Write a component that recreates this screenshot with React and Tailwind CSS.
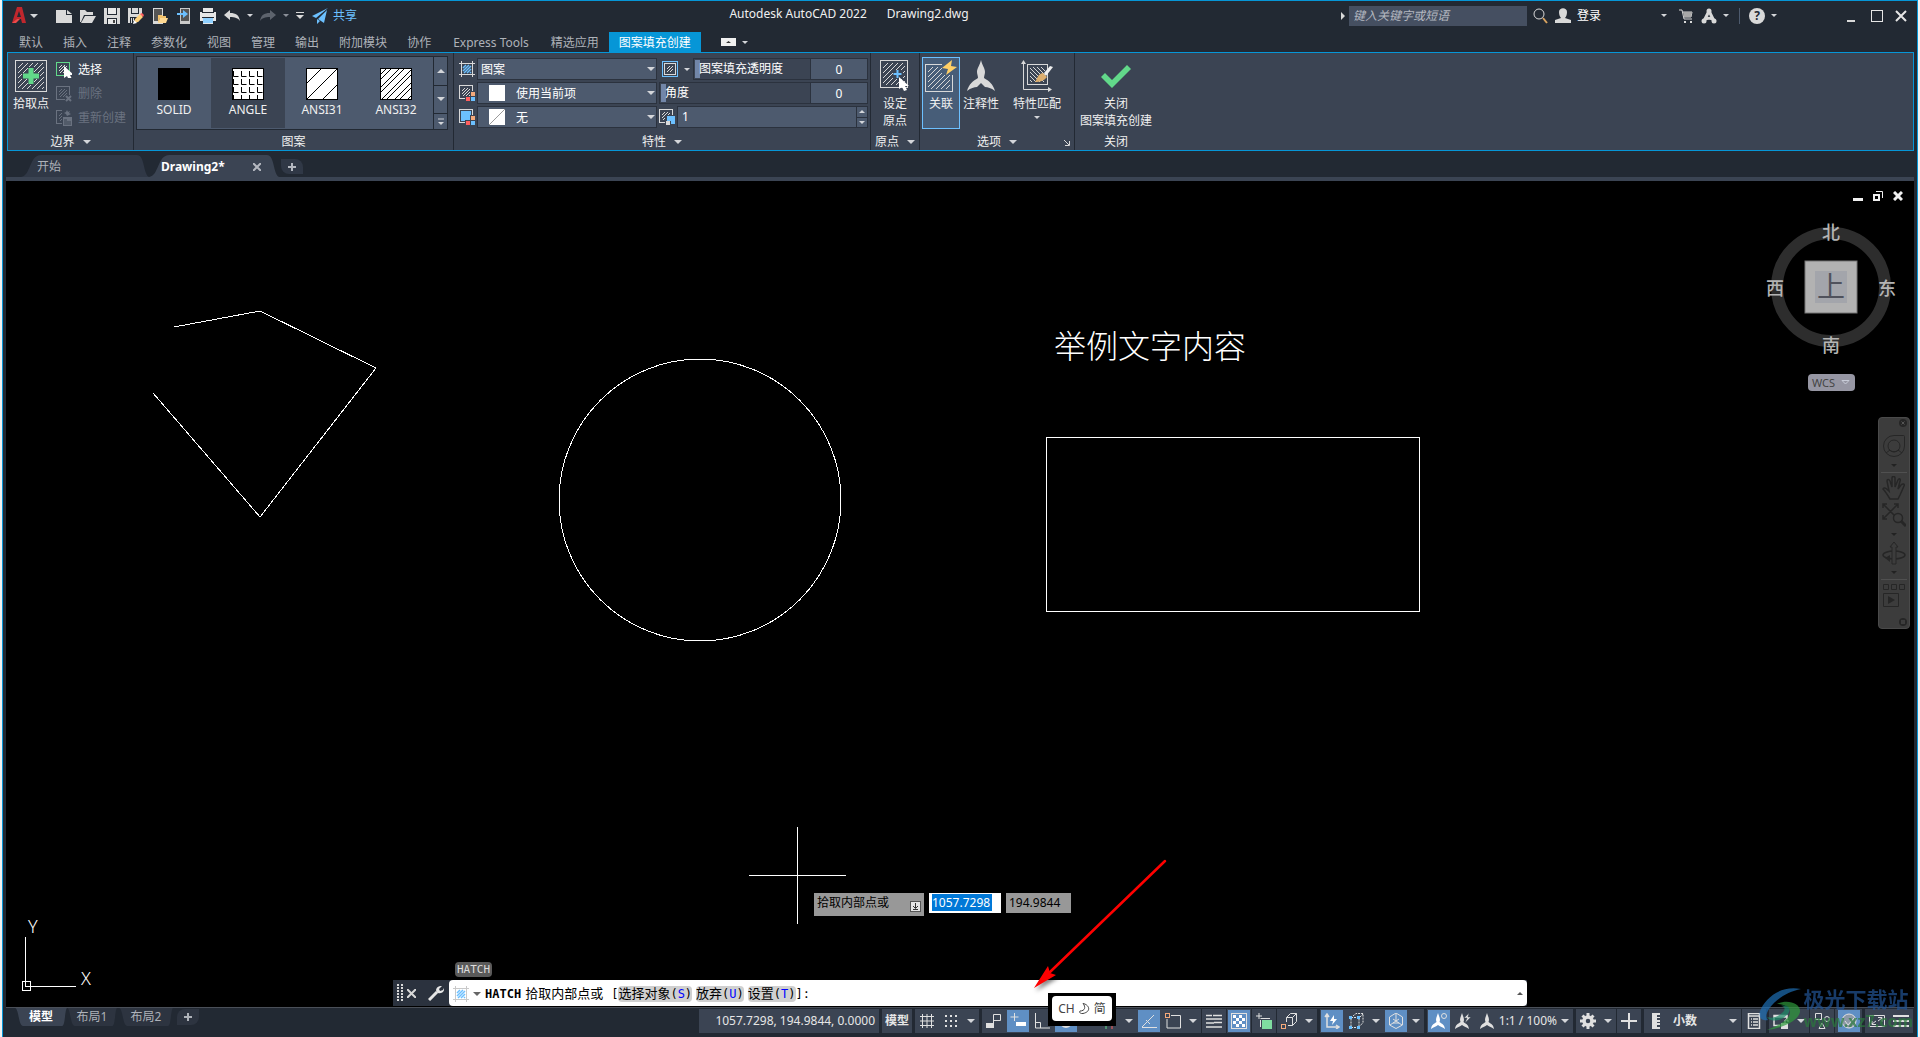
import React, { useState } from "react";

const menuTabs = ["默认", "插入", "注释", "参数化", "视图", "管理", "输出", "附加模块", "协作", "Express Tools", "精选应用", "图案填充创建"];

// diagonal hatch lines inside a square
const hatch = (x, y, w, step, flip) => {
  let d = "";
  for (let c = step; c < 2 * w; c += step) {
    const a = Math.max(0, c - w);
    const b = Math.min(c, w);
    d += flip ? `M${x + w - a} ${y + b}L${x + w - b} ${y + a}` : `M${x + a} ${y + b}L${x + b} ${y + a}`;
  }
  return d;
};

const Drop = ({ className = "text-[#d4d6da]", small }) => (
  <svg width={small ? 6 : 8} height={small ? 3 : 4} viewBox="0 0 8 4" className={`shrink-0 ${className}`}>
    <path d="M0 0h8L4 4z" fill="currentColor" />
  </svg>
);

const Svg = ({ s = 16, h, vb, children, ...rest }) => (
  <svg width={s} height={h || s} viewBox={vb || `0 0 ${s} ${h || s}`} fill="none" className="shrink-0" {...rest}>
    {children}
  </svg>
);

const HatchBox = ({ x = 1, y = 1, w = 12, step = 3, color = "#d9d9d9", line = "#d9d9d9", flip }) => (
  <>
    <path d={hatch(x + 2, y + 2, w - 4, step, flip)} stroke={line} />
    <rect x={x - 0.5} y={y - 0.5} width={w + 1} height={w + 1} stroke={color} />
  </>
);

const Swatches = () => (
  <>
    <path d="M6 11h10v5H6zM11 6h5v10h-5z" fill="#3b4453" />
    <path d="M7 12h4v4H7z" fill="#ff5f5f" />
    <path d="M12 12h4v4h-4z" fill="#6cc0ff" />
    <path d="M12 7h4v4h-4z" fill="#f5a97a" />
  </>
);

/* ---------- title bar ---------- */

const quickIcons = [
  { label: "新建", icon: <path d="M0 2h10v5h6v8H0zM11 2l5 4h-5z" fill="#d9d9d9" /> },
  { label: "打开", icon: <path d="M0 14V2h5l2 2h6v3H4L1 14zM5 8h11l-4 7H1z" fill="#d9d9d9" /> },
  {
    label: "保存",
    icon: (
      <>
        <path d="M0 0h16v16H0z" fill="#d9d9d9" />
        <path d="M3 0h10v7H3zM3 10h10v6H3z" fill="#222933" />
        <path d="M4 0h8v6H4zM4 11h8v5H4z" fill="#e8e8e8" />
        <path d="M9 12h2v3H9z" fill="#444" />
      </>
    ),
  },
  {
    label: "另存为",
    icon: (
      <>
        <path d="M0 0h14v9l-5 6H0z" fill="#d9d9d9" />
        <path d="M3 0h8v6H3zM2 9h8v6H2z" fill="#222933" />
        <path d="M4 0h6v5H4zM3 10h1v5H3zM5 10h1v3H5z" fill="#d9d9d9" />
        <path d="M6 15l1-4 5-5 3 3-5 5z" fill="#ffd27d" />
        <path d="M12 6l2-1 2 2-1 2z" fill="#ff5f5f" />
        <path d="M5 16l1-4 3 3z" fill="#fff" />
      </>
    ),
  },
  {
    label: "从移动设备打开",
    icon: (
      <>
        <path d="M1 0h10v16H1z" fill="#d9d9d9" />
        <path d="M2 1h8v12H2z" fill="#555" />
        <path d="M6 15V7h4l1 1h3v2H8z" fill="#f4c26b" />
        <path d="M8 10h8l-2 5H6z" fill="#ffd891" />
      </>
    ),
  },
  {
    label: "保存到移动设备",
    icon: (
      <>
        <path d="M4 0h10v16H4z" fill="#c9c9c9" />
        <path d="M5 1h8v12H5z" fill="#555" />
        <path d="M1 5h6V2l5 4-5 4V7H1z" fill="#6cc0ff" />
      </>
    ),
  },
  {
    label: "打印",
    icon: (
      <>
        <path d="M3 0h10v4h3v9h-3v3H3v-3H0V4h3z" fill="#e6e6e6" />
        <path d="M2 4h12v1H2zM2 9h12v1H2z" fill="#222933" />
        <path d="M3 10h10v5H3z" fill="#8fd0ff" />
      </>
    ),
  },
  { label: "放弃", icon: <path d="M0 7l6-5v3c6 0 9 2 10 8-2-3-5-4-10-4v3z" fill="#d9d9d9" /> },
];

function TitleBar() {
  return (
    <header className="flex h-[31px] items-center justify-between pb-1 pl-[9px] pr-[10px] pt-0.5">
      <div className="flex items-center">
        <button aria-label="应用程序菜单" className="flex w-10 items-center gap-1">
          <Svg s={14} h={17} vb="0 0 14 17">
            <path d="M5 0h5l4 16h-4l-1-4H5l-2 4H0z" fill="#c0272d" />
            <path d="M7 4l2 6H5z" fill="#222933" />
            <path d="M0 16l5-4h3l-4 4z" fill="#ee4a4a" />
          </Svg>
          <Drop />
        </button>
        {quickIcons.map((q) => (
          <button key={q.label} aria-label={q.label} className="flex w-6 justify-center">
            <Svg>{q.icon}</Svg>
          </button>
        ))}
        <button aria-label="放弃列表" className="flex w-3 justify-center"><Drop small /></button>
        <button aria-label="重做" className="flex w-6 justify-center">
          <Svg><path d="M16 7l-6-5v3C4 5 1 7 0 13c2-3 5-4 10-4v3z" fill="#5d636d" /></Svg>
        </button>
        <button aria-label="重做列表" className="flex w-3 justify-center"><Drop small className="text-[#8b9099]" /></button>
        <button aria-label="自定义快速访问工具栏" className="flex w-4 justify-center">
          <Svg s={8} h={8}><path d="M0 0h8v1H0zM0 3h8L4 7z" fill="#d9d9d9" /></Svg>
        </button>
        <button className="flex items-center gap-[5px] pl-1 text-[#6cc0ff]">
          <Svg>
            <path d="M16 0L0 8l4 2zM15 2l-9 9 6 4zM5 11v5l3-3z" fill="#6cc0ff" />
          </Svg>
          共享
        </button>
      </div>
      <h1 className="flex gap-5 pb-1 text-[#f0f0f0]">
        <span>Autodesk AutoCAD 2022</span>
        <span>Drawing2.dwg</span>
      </h1>
      <div className="flex items-center">
        <Svg s={4} h={8} vb="0 0 4 8"><path d="M0 0l4 4-4 4z" fill="#d9d9d9" /></Svg>
        <input
          aria-label="搜索"
          placeholder="键入关键字或短语"
          className="ml-1 h-5 w-[178px] bg-[#454f61] px-1 italic text-white outline-none placeholder:text-[#b4b8c0]"
        />
        <button aria-label="查找" className="ml-1.5">
          <Svg>
            <circle cx="6" cy="6" r="5" stroke="#d9d9d9" />
            <path d="M10 10l4 5" stroke="#d8a35f" strokeWidth="2" />
          </Svg>
        </button>
        <button className="ml-1.5 flex items-center gap-1.5 text-white">
          <Svg>
            <path d="M4 4c0-5 8-5 8 0 0 3-1 5-2 6l6 2v3H0v-3l6-2C5 9 4 7 4 4z" fill="#d9d9d9" />
          </Svg>
          登录
        </button>
        <button aria-label="登录选项" className="ml-[60px]"><Drop small /></button>
        <button aria-label="应用商店" className="ml-3">
          <Svg s={14}>
            <path d="M0 1h3l2 9h8M4 3h9l-1 5H5" stroke="#d9d9d9" />
            <path d="M4 3h9l-1 5H5z" fill="#a8a8a8" />
            <path d="M5 12h2v2H5zM11 12h2v2h-2z" fill="#d9d9d9" />
          </Svg>
        </button>
        <button aria-label="Autodesk App" className="ml-2 flex items-center gap-1.5">
          <Svg>
            <path d="M8 3L3 13M8 3l5 10M3 12c3-2 7-2 10 0" stroke="#d9d9d9" strokeWidth="3" />
            <circle cx="8" cy="3" r="2.500" fill="#d9d9d9" /><circle cx="3" cy="13" r="2.500" fill="#d9d9d9" /><circle cx="13" cy="13" r="2.500" fill="#d9d9d9" />
          </Svg>
          <Drop small />
        </button>
        <span className="ml-2.5 h-4 w-px bg-[#4d5a6e]" />
        <button className="ml-[9px] flex items-center gap-1.5" aria-label="帮助">
          <span className="flex size-4 items-center justify-center rounded-full bg-[#d9d9d9] font-bold text-[#222933]">?</span>
          <Drop small />
        </button>
        <button aria-label="最小化" className="ml-[70px] flex h-3 w-[10px] items-end"><span className="h-0.5 w-2 bg-[#d9d9d9]" /></button>
        <button aria-label="最大化" className="ml-3.5 h-3 w-3 border border-[#e6e6e6]" />
        <button aria-label="关闭" className="ml-3">
          <Svg s={12}><path d="M1 1l10 10M11 1L1 11" stroke="#e6e6e6" strokeWidth="2" /></Svg>
        </button>
      </div>
    </header>
  );
}

function MenuTabs() {
  const [active, setActive] = useState("图案填充创建");
  return (
    <nav className="flex h-5 items-center pl-1.5">
      {menuTabs.map((t) => (
        <button
          key={t}
          onClick={() => setActive(t)}
          className={`h-5 pt-0.5 ${t === "Express Tools" ? "px-3" : "px-2.5"} ${active === t ? "bg-[#0696d7] text-white" : "text-[#aeb2b9]"}`}
        >
          {t}
        </button>
      ))}
      <button aria-label="最小化功能区" className="ml-5 flex items-center gap-1.5">
        <Svg s={15} h={8}><path d="M0 0h15v8H0z" fill="#f0f0f0" /><path d="M5 5h5L7.500 3z" fill="#333" /></Svg>
        <Drop small />
      </button>
    </nav>
  );
}

/* ---------- ribbon ---------- */

const Panel = ({ title, drop, corner, className = "", children }) => (
  <section className={`flex flex-col border-r border-[#222933] ${className}`}>
    <div className="flex flex-1">{children}</div>
    <div className="relative flex h-[18px] items-center justify-center gap-2 pt-0.5 text-[#f0f0f0]">
      {title}
      {drop && <Drop />}
      {corner && (
        <button aria-label="图案填充设置" className="absolute bottom-1 right-1">
          <Svg s={6}><path d="M0 0l5 5M5.500 1v4.500H1" stroke="#d9d9d9" /></Svg>
        </button>
      )}
    </div>
  </section>
);

const BigButton = ({ icon, lines, drop, active, className = "" }) => (
  <button
    className={`mt-1 flex h-[72px] flex-col items-center border pt-0.5 leading-[17px] text-[#f0f0f0] ${
      active ? "border-[#6cc0ff] bg-[#475d78]" : "border-transparent"
    } ${className}`}
  >
    <span className="mb-[3px] flex h-8 items-center justify-center">{icon}</span>
    {lines.map((l) => (
      <span key={l} className="whitespace-nowrap">{l}</span>
    ))}
    {drop && <span className="mt-1"><Drop small /></span>}
  </button>
);

const Cursor = ({ x, y }) => (
  <path transform={`translate(${x} ${y})`} d="M0 0v12l3-2 2 4 3-1-2-4h4z" fill="#fff" />
);

const patterns = [
  { name: "SOLID", art: <path d="M0 0h32v32H0z" fill="#000" /> },
  {
    name: "ANGLE",
    art: [0, 1, 2, 3, 4].map((r) => [0, 1, 2, 3].map((c) => (
      <path key={`${r}${c}`} d={`M${c * 8 + 1.5} ${r * 8 - 5}v5.500h5`} stroke="#000" />
    ))),
  },
  { name: "ANSI31", art: <path d={hatch(0, 0, 32, 16)} stroke="#000" /> },
  { name: "ANSI32", art: <path d="M0 7L7 0M0 12L12 0M0 20L20 0M0 25L25 0M1 32L32 1M6 32L32 6M14 32l18-18M19 32l13-13M27 32l5-5" stroke="#000" /> },
];

function Gallery() {
  const [picked, setPicked] = useState("ANGLE");
  return (
    <div className="ml-[2px] mr-[2px] mt-[3px] flex h-[74px] border border-[#222933] bg-[#4d5a6e]">
      <div className="flex flex-1 py-px">
        {patterns.map((p) => (
          <button
            key={p.name}
            onClick={() => setPicked(p.name)}
            className={`flex w-[74px] flex-col items-center pt-2.5 text-[#f0f0f0] ${picked === p.name ? "bg-[#3b4453]" : ""}`}
          >
            <svg width="32" height="32" className="mb-px bg-white" fill="none">
              {p.art}
              <rect x="0.5" y="0.5" width="31" height="31" stroke="#000" />
            </svg>
            {p.name}
          </button>
        ))}
      </div>
      <div className="flex w-[14px] flex-col gap-px border-l border-[#222933] bg-[#222933]">
        <button aria-label="上一行" className="flex flex-1 items-center justify-center bg-[#4d5a6e]"><Drop className="rotate-180 text-[#d4d6da]" /></button>
        <button aria-label="下一行" className="flex flex-1 items-center justify-center bg-[#4d5a6e]"><Drop /></button>
        <button aria-label="展开" className="flex h-[15px] flex-col items-center justify-center gap-0.5 bg-[#4d5a6e]">
          <span className="h-0.5 w-1.5 bg-[#8b93a1]" /><Drop small />
        </button>
      </div>
    </div>
  );
}

const Select = ({ id, label, value, swatch }) => (
  <span className="relative flex h-[22px] w-[180px]">
    <select
      id={id}
      aria-label={label}
      defaultValue={value}
      className={`w-full appearance-none border border-[#2b323e] bg-[#4d5a6e] pt-px text-white outline-none ${swatch ? "pl-[38px]" : "pl-[3px]"}`}
    >
      <option>{value}</option>
    </select>
    {swatch && <span className="pointer-events-none absolute left-3 top-[3px]">{swatch}</span>}
    <span className="pointer-events-none absolute right-0.5 top-[9px]"><Drop /></span>
  </span>
);

const Slider = ({ id, label }) => (
  <div className="flex h-[22px] flex-1 border border-[#2b323e]">
    <div className="relative flex-1">
      <input
        id={id}
        type="range"
        defaultValue="0"
        className="block h-full w-full appearance-none bg-transparent pl-px [&::-webkit-slider-thumb]:h-[18px] [&::-webkit-slider-thumb]:w-[5px] [&::-webkit-slider-thumb]:appearance-none [&::-webkit-slider-thumb]:bg-[#7286a8]"
      />
      <label htmlFor={id} className="pointer-events-none absolute left-[5px] top-0 leading-5 text-white">{label}</label>
    </div>
    <input
      aria-label={`${label}值`}
      defaultValue="0"
      className="w-[57px] border-l border-[#2b323e] bg-[#4d5a6e] pt-px text-center text-white outline-none"
    />
  </div>
);

const SmallRow = ({ icon, text, disabled }) => (
  <button disabled={disabled} className={`flex h-6 items-center gap-1.5 whitespace-nowrap ${disabled ? "text-[#6a7280]" : "text-white"}`}>
    <Svg>{icon}</Svg>
    {text}
  </button>
);

function Ribbon() {
  return (
    <div className="ml-1 mr-[3px] flex h-[99px] border border-[#0696d7] bg-[#3b4453]">
      <Panel title="边界" drop className="w-[126px]">
        <BigButton
          className="ml-[5px] w-9"
          lines={["拾取点"]}
          icon={
            <Svg s={32}>
              <HatchBox x={1} y={1} w={30} step={5} />
              <path d="M13 7h6v6h6v6h-6v6h-6v-6H7v-6h6z" fill="#3b4453" />
              <path d="M13.500 8h5v5.500H24v5h-5.500V24h-5v-5.500H8v-5h5.500z" fill="#62d98a" />
            </Svg>
          }
        />
        <div className="ml-[7px] mt-[5px] flex flex-col">
          <SmallRow text="选择" icon={<><HatchBox color="#62d98a" /><Cursor x={8} y={4} /></>} />
          <SmallRow
            disabled
            text="删除"
            icon={<><HatchBox color="#6a7280" line="#6a7280" /><path d="M9 9h7v7H9z" fill="#3b4453" /><path d="M10 10l5 5M15 10l-5 5" stroke="#6a7280" strokeWidth="2" /></>}
          />
          <SmallRow
            disabled
            text="重新创建"
            icon={<><HatchBox color="#6a7280" line="#6a7280" /><path d="M6 0h10v16H6z" fill="#3b4453" /><path d="M7 7h9v9H7zM11 0l1 2 2-1-1 2 2 1-2 1-2 1-1-2-2-1 2-1z" fill="#6a7280" /><path d="M8 10h3M8 12h7M8 14h7" stroke="#3b4453" /></>}
          />
        </div>
      </Panel>

      <Panel title="图案" className="w-[320px]">
        <Gallery />
      </Panel>

      <Panel title="特性" drop className="w-[417px]">
        <div className="flex flex-1 flex-col gap-0.5 pl-[5px] pr-0.5 pt-[5px]">
          <div className="flex items-center gap-0.5">
            <label htmlFor="type">
              <Svg><path d="M0 2.500h16M0 13.500h16M2.500 0v16M13.500 0v16" stroke="#d9d9d9" /><path d={hatch(4, 4, 8, 3)} stroke="#6cc0ff" strokeWidth="1.500" /></Svg>
            </label>
            <Select id="type" label="图案填充类型" value="图案" />
            <button aria-label="图案填充透明度选项" className="ml-[3px] mr-px flex items-center gap-1.5">
              <Svg><rect x="0.500" y="0.500" width="15" height="15" stroke="#6cc0ff" /><HatchBox x={3} y={3} w={10} /></Svg>
              <Drop small />
            </button>
            <Slider id="opacity" label="图案填充透明度" />
          </div>
          <div className="flex items-center gap-0.5">
            <label htmlFor="color"><Svg><HatchBox /><Swatches /></Svg></label>
            <Select id="color" label="图案填充颜色" value="使用当前项" swatch={<Svg><path d="M0 0h16v16H0z" fill="#fff" /></Svg>} />
            <Slider id="angle" label="角度" />
          </div>
          <div className="flex items-center gap-0.5">
            <label htmlFor="bg">
              <Svg><rect x="0.500" y="0.500" width="13" height="13" stroke="#d9d9d9" /><path d="M2 2h10v10H2z" fill="#6cc0ff" /><Swatches /></Svg>
            </label>
            <Select
              id="bg"
              label="背景色"
              value="无"
              swatch={<Svg><path d="M0 0h16v16H0z" fill="#fff" /><path d="M0 16L16 0" stroke="#999" /></Svg>}
            />
            <label htmlFor="scale">
              <Svg><HatchBox /><path d="M6 6h10v10H6z" fill="#3b4453" /><path d="M8 7h8v8h-4v-3H8z" fill="#6cc0ff" /><path d="M7 12h4v4H7z" fill="#d9d9d9" /></Svg>
            </label>
            <div className="flex h-[22px] flex-1 border border-[#2b323e] bg-[#4d5a6e]">
              <input id="scale" defaultValue="1" className="w-0 flex-1 bg-transparent pl-1 text-white outline-none" />
              <div className="flex w-[11px] flex-col gap-px bg-[#2b323e] pl-px">
                <button aria-label="增大" className="flex flex-1 items-center justify-center bg-[#4d5a6e]"><Drop small className="rotate-180 text-[#d4d6da]" /></button>
                <button aria-label="减小" className="flex flex-1 items-center justify-center bg-[#4d5a6e]"><Drop small /></button>
              </div>
            </div>
          </div>
        </div>
      </Panel>

      <Panel title="原点" drop className="w-[49px]">
        <BigButton
          className="w-12"
          lines={["设定", "原点"]}
          icon={
            <Svg s={32}>
              <HatchBox x={2} y={1} w={26} step={5} />
              <path d="M14 10h10v9H14z" fill="#3b4453" />
              <path d="M18.500 10v8M14.500 14h8" stroke="#6cc0ff" strokeWidth="2" />
              <Cursor x={20} y={17} />
            </Svg>
          }
        />
      </Panel>

      <Panel title="选项" drop corner className="w-[155px]">
        <BigButton
          active
          className="ml-0.5 w-[38px]"
          lines={["关联"]}
          icon={
            <Svg s={32}>
              <HatchBox x={1} y={5} w={26} step={5} />
              <path d="M17 4h14v11H17z" fill="#475d78" />
              <path d="M27 0L17 8l6 1-2 6 11-8-6-1z" fill="#ffcf66" />
            </Svg>
          }
        />
        <BigButton
          className="w-[42px]"
          lines={["注释性"]}
          icon={<Svg s={32}><path d="M16 0c1 5 4 8 4 12 0 2-1 4-1 6 5 3 9 6 11 13-4-3-7-4-10-4l-4-4-4 4c-3 0-6 1-10 4 2-7 6-10 11-13 0-2-1-4-1-6 0-4 3-7 4-12z" fill="#d9d9d9" /></Svg>}
        />
        <BigButton
          drop
          className="ml-2 w-[54px]"
          lines={["特性匹配"]}
          icon={
            <Svg s={32}>
              <path d="M2.500 2v27.500H30" stroke="#d9d9d9" />
              <path d="M0 4l2.500-4L5 4zM27 27l4 2.500-4 2.500z" fill="#d9d9d9" />
              <HatchBox x={7} y={5} w={19} step={4} flip />
              <path d="M14 22c2-2 2-8 8-9l4 4c-3 4-7 5-12 5z" fill="#dcae6e" />
              <path d="M23 13l6-7 3 1-7 9z" fill="#f0f0f0" />
            </Svg>
          }
        />
      </Panel>

      <section className="w-[82px]">
        <BigButton
          className="w-[82px]"
          lines={["关闭", "图案填充创建"]}
          icon={<Svg s={32}><path d="M1 17l4-4 7 7L27 5l4 4-19 19z" fill="#62d98a" /></Svg>}
        />
        <div className="mt-[3px] flex h-[18px] items-center justify-center pt-0.5 text-[#f0f0f0]">关闭</div>
      </section>
    </div>
  );
}

/* ---------- document tabs ---------- */

const TabShape = ({ fill, flip }) => (
  <svg viewBox="0 0 128 22" preserveAspectRatio="none" className={`absolute inset-0 h-full w-full ${flip ? "-scale-y-100" : ""}`}>
    <path d="M0 22C10 21 8 0 20 0h96c8 0 6 19 12 22z" fill={fill} />
  </svg>
);

function DocTabs() {
  return (
    <div className="flex h-[26px] items-end pl-[18px]">
      <button className="relative h-[22px] w-[128px] pl-4 pt-px text-left text-[#aeb2b9]">
        <TabShape fill="#303846" />
        <span className="relative">开始</span>
      </button>
      <div className="relative flex h-[22px] w-[130px] items-center justify-between pl-3 pr-[18px] pt-px text-white">
        <TabShape fill="#3b4453" />
        <button className="relative font-bold">Drawing2*</button>
        <button aria-label="关闭标签" className="relative">
          <Svg s={8}><path d="M0 0l8 8M8 0L0 8" stroke="#b4b8c0" strokeWidth="2" /></Svg>
        </button>
      </div>
      <button aria-label="新图形" className="mb-[3px] ml-0.5 flex h-[15px] w-[22px] items-center justify-center rounded-bl-lg rounded-tr-lg bg-[#303846]">
        <Svg s={8}><path d="M4 0v8M0 4h8" stroke="#b4b8c0" strokeWidth="2" /></Svg>
      </button>
    </div>
  );
}

/* ---------- drawing area ---------- */

const dim = "#262626";

const NavDrop = () => <span className="flex h-2 items-center justify-center"><Drop small className="text-[#222]" /></span>;

function NavBar() {
  return (
    <div className="absolute right-1 top-[236px] flex w-8 flex-col items-center gap-[3px] rounded border border-[#4a4a4a] bg-[#3c3c3c] pb-0.5">
      <button aria-label="关闭导航栏" className="ml-auto mr-0.5 mt-px">
        <Svg s={8}><circle cx="4" cy="4" r="4" fill={dim} /><path d="M2.500 2.500l3 3M5.500 2.500l-3 3" stroke="#555" /></Svg>
      </button>
      <button aria-label="导航控制盘" className="mt-1">
        <Svg s={24}>
          <path d="M12 1.500h9.500a1 1 0 0 1 1 1V12A10.500 10.500 0 1 1 12 1.500z" stroke={dim} />
          <circle cx="12" cy="12" r="6" stroke={dim} /><path d="M4 19l4-3M20 19l-4-3M7 15a6 6 0 0 0 10 0" stroke={dim} />
        </Svg>
      </button>
      <NavDrop />
      <span className="h-px w-[26px] bg-[#505050]" />
      <button aria-label="平移">
        <Svg s={24}><path d="M8 23C5 18 3 15 1 13c1-2 3-1 6 2L5 5c0-2 2-2 3 0l2 6V2c0-2 3-2 3 0v9l3-7c1-2 3-1 2 1l-2 8 3-4c2-2 4-1 3 1l-4 9-2 4z" stroke={dim} strokeWidth="1.500" /></Svg>
      </button>
      <button aria-label="缩放">
        <Svg s={24}>
          <path d="M2 2l13 13M2 15L15 2M1 5V1h4M12 1h4v4M1 12v4h4" stroke={dim} strokeWidth="1.500" />
          <circle cx="16" cy="15" r="4.500" fill="#3c3c3c" stroke={dim} strokeWidth="1.500" /><path d="M19 18l5 5" stroke={dim} strokeWidth="3" />
        </Svg>
      </button>
      <NavDrop />
      <button aria-label="动态观察">
        <Svg s={24}>
          <ellipse cx="12" cy="14" rx="11" ry="4" stroke={dim} strokeWidth="1.500" />
          <path d="M10 23V6H8l4-5 4 5h-2v17z" fill="#3c3c3c" stroke={dim} /><path d="M3 17l5-3v7z" fill={dim} />
        </Svg>
      </button>
      <NavDrop />
      <span className="h-px w-[26px] bg-[#505050]" />
      <button aria-label="ShowMotion">
        <Svg s={24}>
          <path d="M1.500 1.500h5v5h-5zM9.500 1.500h5v5h-5zM17.500 1.500h5v5h-5zM1.500 10.500h15v13h-15z" stroke={dim} /><path d="M6 13l7 4-7 4z" fill={dim} />
        </Svg>
      </button>
      <button aria-label="导航栏选项" className="ml-auto mr-0.5 mt-2">
        <Svg s={8}><circle cx="4" cy="4" r="4" fill={dim} /><path d="M2 3h4M2 5h4" stroke="#555" /></Svg>
      </button>
    </div>
  );
}

function ViewCube() {
  return (
    <div className="absolute right-[17px] top-9 flex flex-col items-center">
      <svg width="132" height="142" fontSize="18" fill="#b4b4b4" textAnchor="middle">
        <circle cx="66" cy="70" r="54" fill="none" stroke="#2d2d2d" strokeWidth="12" />
        <rect x="40" y="44" width="52" height="52" fill="#b2b2b2" stroke="#777" />
        <rect x="50" y="54" width="32" height="32" fill="#a3a5ab" />
        <g className="font-medium">
          <text x="66" y="22">北</text>
          <text x="66" y="135">南</text>
          <text x="10" y="78">西</text>
          <text x="122" y="78">东</text>
        </g>
        <text x="66" y="80" fontSize="28" fill="#50525c">上</text>
      </svg>
      <button className="mt-[15px] flex h-[17px] w-[47px] items-center justify-center gap-1.5 rounded bg-[#9696a3] text-[11px] text-[#444]">
        WCS
        <Svg s={9} h={5}><path d="M1 .5h7L4.500 4z" stroke="#c8ccd8" /></Svg>
      </button>
    </div>
  );
}

const Option = ({ text, hot }) => (
  <button className="mr-1 flex h-4 items-center rounded bg-[#d0d0d0]">
    <span className="text-[13px]">{text}</span>(<span className="text-[#0000ff]">{hot}</span>)
  </button>
);

function CommandLine() {
  return (
    <div className="absolute inset-x-[387px] bottom-px">
      <div className="mb-[3px] ml-[62px] w-fit rounded-sm bg-[#5a5a5a] px-0.5 font-['DejaVu_Sans_Mono',monospace] text-[11px] leading-[15px] text-[#dcdcdc]">HATCH</div>
      <div className="flex h-[26px] bg-[#2b323e]">
        <div className="flex w-14 items-center pl-1">
          <Svg s={6} h={18}>
            {[0, 3, 6, 9, 12, 15].map((y) => <path key={y} d={`M0 ${y}h2v2H0zM4 ${y}h2v2H4z`} fill="#d9d9d9" />)}
          </Svg>
          <button aria-label="关闭命令行" className="ml-1"><Svg s={9}><path d="M0 0l9 9M9 0L0 9" stroke="#d9d9d9" strokeWidth="2" /></Svg></button>
          <button aria-label="自定义" className="ml-3">
            <Svg s={16}><path d="M1 15l8-8" stroke="#e6e6e6" strokeWidth="3" /><path d="M14 1l-3 3 1 2 3-1 1-2c1 4-3 6-6 5S7 1 14 1z" fill="#e6e6e6" /></Svg>
          </button>
        </div>
        <div className="flex flex-1 items-center rounded-sm bg-white pl-1 pr-1 pt-px font-['DejaVu_Sans_Mono','Noto_Sans_CJK_SC',monospace] text-black">
          <button aria-label="最近使用的命令" className="flex items-center gap-1">
            <Svg><path d="M0 2.500h16M0 13.500h16M2.500 0v16M13.500 0v16" stroke="#c9c9c9" /><path d={hatch(4, 4, 8, 3)} stroke="#6cc0ff" strokeWidth="1.500" /></Svg>
            <Drop className="text-[#666]" />
          </button>
          <span className="ml-1 font-bold">HATCH</span>
          <span className="ml-1 text-[13px]">拾取内部点或</span>
          <span className="ml-2">[</span>
          <Option text="选择对象" hot="S" />
          <Option text="放弃" hot="U" />
          <Option text="设置" hot="T" />
          <label htmlFor="cmd" className="-ml-1">]:</label>
          <input id="cmd" className="w-0 flex-1 outline-none" />
          <button aria-label="命令历史"><Drop small className="rotate-180 text-[#555]" /></button>
        </div>
      </div>
    </div>
  );
}

function Canvas() {
  return (
    <main className="relative z-10 mx-[3px] flex-1 bg-black">
      <svg className="absolute inset-0 h-full w-full" fill="none" stroke="#fff" shapeRendering="crispEdges">
        <polyline points="168,146 254,130 370,187 254,336 147,212" />
        <circle cx="694" cy="319" r="141" />
        <rect x="1040.500" y="256.500" width="373" height="174" />
        <path d="M791.500 646v97M743 694.500h97" />
        <path d="M19.500 756v49.500H70M16.500 800.500h8v9h-8z" />
        <g stroke="none" fill="#fff" fontSize="18" shapeRendering="auto" className="font-light">
          <text x="22" y="752">Y</text>
          <text x="75" y="804">X</text>
        </g>
        <text x="1048" y="177" stroke="none" fill="#fff" fontSize="32" className="font-light">举例文字内容</text>
      </svg>

      <div className="absolute right-[11px] top-2.5 flex items-center gap-2.5">
        <button aria-label="最小化视口" className="flex h-2.5 w-2.5 items-end"><span className="h-[3px] w-full bg-[#f0f0f0]" /></button>
        <button aria-label="还原视口">
          <Svg s={10}><path d="M1 4h5v5H1z" stroke="#f0f0f0" strokeWidth="2" /><path d="M3 .5h6.500V7" stroke="#f0f0f0" /></Svg>
        </button>
        <button aria-label="关闭视口">
          <Svg s={10}><path d="M1 1l8 8M9 1L1 9" stroke="#f0f0f0" strokeWidth="3" /></Svg>
        </button>
      </div>

      <ViewCube />
      <NavBar />

      <div className="absolute left-[808px] top-[712px] flex items-start gap-[5px]">
        <label htmlFor="dynx" className="flex h-[23px] w-[110px] items-end justify-between bg-[#989898] pl-[3px] pr-[3px] text-black">
          <span className="self-start leading-5">拾取内部点或</span>
          <span className="mb-1">
            <Svg s={11}><rect x=".5" y=".5" width="10" height="10" fill="#e6e6e6" stroke="#555" /><path d="M5.500 2v5M3 5l2.500 2.500L8 5M3 8.500h5" stroke="#333" /></Svg>
          </span>
        </label>
        <span className="flex h-5 w-[72px] bg-white p-[1px] pl-[3px]">
          <input id="dynx" defaultValue="1057.7298" className="h-[17px] w-[60px] bg-[#0078d7] text-white outline-none" />
        </span>
        <input aria-label="Y" defaultValue="194.9844" className="h-5 w-[65px] bg-[#989898] pb-px pl-[3px] text-black outline-none" />
      </div>

      <CommandLine />

      <svg className="pointer-events-none absolute left-[1020px] top-[670px] overflow-visible drop-shadow-[2px_3px_2px_rgba(0,0,0,0.5)]" width="145" height="145">
        <path d="M139 10L24 121" stroke="#f00" strokeWidth="2.500" strokeLinecap="round" />
        <path d="M8 137l14-22 2 7 6 2z" fill="#f00" />
      </svg>

      <div className="absolute left-[1042px] top-[812px] flex h-[33px] w-[68px] justify-center bg-black pt-[3px]">
        <div className="flex h-[25px] w-[60px] items-center justify-center gap-1 rounded bg-white text-[#444]">
          CH
          <Svg s={11}><path d="M4 .5c6 1 9 8 0 10C1 11 0 9 1 8c5 0 6-4 3-7.500z" stroke="#444" /></Svg>
          简
        </div>
      </div>
    </main>
  );
}

/* ---------- status bar ---------- */

const Group = ({ tight, className = "", children }) => (
  <div className={`flex h-6 items-center bg-[#3b4453] text-[#e6e6e6] ${tight ? "ml-px" : "ml-[3px]"} ${className}`}>{children}</div>
);

const Tool = ({ label, on, children }) => (
  <button aria-label={label} aria-pressed={!!on} className={`flex size-6 items-center justify-center border border-[#3b4453] ${on ? "bg-[#5f8fc4]" : ""}`}>
    <Svg stroke="#e0e0e0">{children}</Svg>
  </button>
);

const ToolDrop = ({ label }) => (
  <button aria-label={label} className="flex h-6 w-4 items-center justify-center"><Drop /></button>
);

const annoPath = "M8 0c1 3 2 5 2 7l-.5 2c3 2 5 3 5.500 7-3-2-4-2-7-4-3 2-4 2-7 4 .5-4 2.500-5 5.500-7L6 7c0-2 1-4 2-7z";

function StatusBar() {
  return (
    <footer className="mx-[3px] flex h-[30px] items-start border-t border-[#4a4f58] pr-px">
      <nav className="flex h-[18px] items-center pl-[9px]">
        <button className="relative h-[18px] w-[52px] font-bold text-white"><TabShape fill="#3b4453" flip /><span className="relative">模型</span></button>
        <button className="relative h-[18px] w-[50px] text-[#aeb2b9]"><TabShape fill="#2d3440" flip /><span className="relative">布局1</span></button>
        <button className="relative ml-0.5 h-[18px] w-[54px] text-[#aeb2b9]"><TabShape fill="#2d3440" flip /><span className="relative">布局2</span></button>
        <button aria-label="新建布局" className="ml-1 flex h-4 w-[22px] items-center justify-center rounded-br-lg rounded-tl-lg bg-[#2d3440]">
          <Svg s={8}><path d="M4 0v8M0 4h8" stroke="#aeb2b9" strokeWidth="2" /></Svg>
        </button>
      </nav>
      <div className="ml-auto mt-px flex">
        <Group className="w-[180px] justify-end pr-1">1057.7298, 194.9844, 0.0000</Group>
        <Group className="w-[30px] justify-center"><button className="font-bold">模型</button></Group>
        <Group>
          <Tool label="栅格"><path d="M3.500 1v14M8 1v14M12.500 1v14M1 3.500h14M1 8h14M1 12.500h14" /></Tool>
          <Tool label="捕捉">
            <path d="M2 3h2M7 3h2M12 3h2M2 8h2M7 8h2M12 8h2M2 13h2M7 13h2M12 13h2" strokeWidth="2" />
          </Tool>
          <ToolDrop label="捕捉选项" />
        </Group>
        <Group>
          <Tool label="推断约束"><path d="M7.500 10V1.500h7v6H8" /><path d="M0 10h8v5H0z" fill="#e0e0e0" stroke="none" /></Tool>
          <Tool label="动态输入" on><path d="M4.500 0v8M.5 4h8" /><path d="M6 9h10v4H6z" fill="#fff" stroke="none" /></Tool>
          <Tool label="正交"><path d="M1.500 0v15H16M1.500 9.500h5V15" /></Tool>
          <Tool label="极轴追踪" on><circle cx="8" cy="9" r="5" strokeWidth="2" /></Tool>
          <button aria-label="等轴测草图" className="h-6 w-[19px]" />
          <Tool label="对象捕捉追踪"><path d="M5 17v-4" stroke="#62d98a" /><path d="M11 17v-4" stroke="#ff5f5f" /></Tool>
          <ToolDrop label="极轴选项" />
          <Tool label="追踪" on><path d="M1 14.500h15M1 14L13 2M5 7l4 4" /></Tool>
          <Tool label="二维对象捕捉"><path d="M6 2.500h9.500V15H2V6" /><rect x=".5" y=".5" width="4" height="4" stroke="#f5a97a" /></Tool>
          <ToolDrop label="捕捉设置" />
        </Group>
        <Group tight>
          <Tool label="线宽"><path d="M0 2.500h6M7 2.500h9M0 6h10M0 6h16M0 10h8M8 9.500h8M0 14h16" strokeWidth="1.500" /></Tool>
        </Group>
        <Group tight>
          <Tool label="透明度" on>
            <rect x=".5" y=".5" width="15" height="15" />
            <path d="M2 2h3v3H2zM8 2h3v3H8zM5 5h3v3H5zM11 5h3v3h-3zM2 8h3v3H2zM8 8h3v3H8zM5 11h3v3H5zM11 11h3v3h-3z" fill="#fff" stroke="none" />
          </Tool>
        </Group>
        <Group tight>
          <Tool label="选择循环"><path d="M3 0v6M0 3h6M4.500 7v7M4.500 5.500H14" /><path d="M6 7h10v9H6z" fill="#7fdca0" stroke="none" /></Tool>
        </Group>
        <Group tight>
          <Tool label="三维对象捕捉"><path d="M5.500 4.500l4-4h6v8l-4 4M5.500 9V4.500h6v8H7M11.500 4.500l4-4" /><rect x=".5" y="11.500" width="4" height="4" stroke="#f5a97a" /></Tool>
          <ToolDrop label="三维捕捉选项" />
        </Group>
        <Group>
          <Tool label="动态 UCS" on><path d="M3 2v12h12M1 4l2-3 2 3M12 12l3 2-3 2" strokeWidth="1.500" /><path d="M10 2L6 8h3l-1 4 5-6h-3z" fill="#fff" stroke="none" /></Tool>
          <Tool label="选择过滤"><path d="M3 4.500h8v10H3zM5 3l3-2.500h7v9L12 13M12 4l3-3" strokeDasharray="2 1" /><path d="M1 3h3v3H1zM9 3h3v3H9zM1 13h3v3H1zM9 13h3v3H9z" fill="#6cc0ff" stroke="none" /></Tool>
          <ToolDrop label="过滤选项" />
          <Tool label="小控件" on><path d="M8 0l6.500 4v8L8 15.500 1.500 12V4zM8 0v8l-6 4M8 8l6 4M5 6l3 2 3-2M5 10h6" /></Tool>
          <ToolDrop label="小控件选项" />
        </Group>
        <Group>
          <Tool label="注释可见性" on><path d={annoPath} transform="translate(-1 0)" fill="#fff" stroke="none" /><circle cx="13" cy="3" r="2.500" fill="#5f8fc4" /></Tool>
          <Tool label="自动缩放"><path d={annoPath} transform="translate(-1 0)" fill="#e0e0e0" stroke="none" /><path d="M14 0l-5 5h3l-2 5 6-6h-3z" fill="#e0e0e0" stroke="#3b4453" strokeWidth=".5" /></Tool>
          <Tool label="注释"><path d={annoPath} fill="#e0e0e0" stroke="none" /></Tool>
          <button className="flex w-[74px] items-center justify-end gap-1 whitespace-nowrap pr-1">1:1 / 100% <Drop /></button>
        </Group>
        <Group>
          <Tool label="切换工作空间">
            <circle cx="8" cy="8" r="4" strokeWidth="3.500" />
            <path d="M8 0v3M8 13v3M0 8h3M13 8h3M2.500 2.500l2 2M11.500 11.500l2 2M13.500 2.500l-2 2M4.500 11.500l-2 2" strokeWidth="3" />
          </Tool>
          <ToolDrop label="工作空间" />
        </Group>
        <Group tight><Tool label="注释监视器"><path d="M8 0v16M0 8h16" strokeWidth="2" /></Tool></Group>
        <Group className="w-[97px]">
          <label htmlFor="units" className="ml-1"><Svg><path d="M4 0h8v2H9v2h3v1H9v2h3v2H9v1h3v2H9v2h3v2H4z" fill="#e0e0e0" /></Svg></label>
          <span className="relative flex flex-1 items-center">
            <select id="units" defaultValue="小数" className="w-full appearance-none bg-transparent pl-[9px] font-bold outline-none"><option>小数</option></select>
            <span className="pointer-events-none absolute right-1"><Drop /></span>
          </span>
        </Group>
        <Group tight><Tool label="快捷特性"><path d="M2.500.5h11v15h-11zM3 3h10M5 6h1M7 6h5M5 9h1M7 9h5M5 12h1M7 12h5" strokeWidth="1.500" /></Tool></Group>
        <Group>
          <Tool label="锁定用户界面"><path d="M7 12.500H1v-10h13V6M1 4h13" strokeWidth="1.500" /><path d="M8 10h7v6H8z" fill="#e0e0e0" stroke="none" /><path d="M12 10V7h3v2" /></Tool>
          <ToolDrop label="锁定选项" />
        </Group>
        <Group tight><Tool label="隔离对象"><path d="M1.500.5h6v6h-6zM5 15.500l3-5.500 3 5.500z" /><circle cx="13" cy="6" r="2.500" /></Tool></Group>
        <Group tight className="w-[27px] justify-center"><Tool label="硬件加速" on><circle cx="8" cy="8" r="7" fill="#8d99a8" /><path d="M4 8l3 4 6-7" /></Tool></Group>
        <Group className="ml-0.5">
          <Tool label="全屏显示"><path d="M.5 2.500h15v11H.5zM9 4.500h4v4M13 5L9 8M3 8v3.500h4M3 11l4-3" /></Tool>
          <Tool label="自定义"><path d="M0 3h16M0 8h16M0 13h16" strokeWidth="2" /></Tool>
        </Group>
      </div>
    </footer>
  );
}

function Watermark() {
  return (
    <div className="pointer-events-none absolute bottom-1.5 right-1 z-20 flex items-center opacity-70">
      <svg width="44" height="44" viewBox="0 0 44 44">
        <path d="M42 2C20-2 6 12 1 24c-2 8 3 10 8 9C2 26 20 6 42 2z" fill="#1f6fb5" />
        <path d="M18 17c10-5 24-1 23 8-2 9-17 16-33 18 14-5 24-12 23-19-1-4-6-7-13-7z" fill="#2f9a3c" />
        <path d="M8 30c4 2 10 0 15-4 4-3 3-7-1-7 8-2 11 4 6 9-6 6-15 8-20 2z" fill="#1d8a68" />
      </svg>
      <div className="flex flex-col items-start">
        <span className="text-[21px] font-bold leading-6 text-[#235596]">极光下载站</span>
        <span className="text-[16px] font-bold leading-5 text-[#2a7a3c]">www.xz7.com</span>
      </div>
    </div>
  );
}

export default function App() {
  return (
    <div className="min-h-screen bg-[#f3f3f3] px-0.5 font-['Noto_Sans','Noto_Sans_CJK_SC',sans-serif] text-[12px] leading-[18px]">
      <div className="relative flex min-h-screen flex-col border-x border-t border-[#0696d7] bg-[#222933]">
        <TitleBar />
        <MenuTabs />
        <Ribbon />
        <DocTabs />
        <div className="mx-[3px] h-1 bg-[#3b4453]" />
        <Canvas />
        <StatusBar />
        <Watermark />
      </div>
    </div>
  );
}
